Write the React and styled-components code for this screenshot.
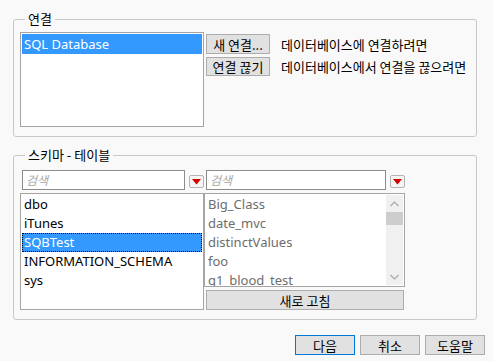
import React from "react";
import styled, { createGlobalStyle } from "styled-components";

const GlobalStyle = createGlobalStyle`
  html, body {
    margin: 0;
    padding: 0;
    background: #f9f9f9;
    font-family: "Noto Sans", "Noto Sans CJK KR", sans-serif;
    font-size: 13px;
    color: #000;
  }
`;

const Page = styled.div`
  width: 493px;
  height: 361px;
  padding: 0 16px 0 13px;
  box-sizing: border-box;
  display: flex;
  flex-direction: column;
`;

const Group = styled.fieldset`
  margin: ${(p) => p.$top}px 0 0 0;
  padding: ${(p) => p.$pt}px 6px ${(p) => p.$pb}px 6px;
  border: 1px solid #c8c8c8;
  border-radius: 3px;
  min-width: 0;
`;

const Legend = styled.legend`
  padding: 0 3px;
  margin-left: 5px;
  line-height: 18px;
  font-family: "Noto Sans CJK KR", sans-serif;
  font-size: 13px;
`;

const ConnRow = styled.div`
  display: flex;
  align-items: flex-start;
`;

const ListBox = styled.div`
  box-sizing: border-box;
  width: ${(p) => p.$w}px;
  height: ${(p) => p.$h}px;
  border: 1px solid #a5a5a5;
  background: #fff;
  padding: 1px;
  overflow: hidden;
  flex: none;
  display: flex;
`;

const Items = styled.div`
  flex: 1;
  min-width: 0;
`;

const Item = styled.div`
  height: ${(p) => p.$h}px;
  line-height: ${(p) => p.$h}px;
  padding-left: 2px;
  box-sizing: border-box;
  white-space: nowrap;
  font-size: 13px;
  color: ${(p) => (p.$sel ? "#fff" : p.$muted ? "#6d6d6d" : "#000")};
  background: ${(p) => (p.$sel ? "#3399ff" : "transparent")};
  outline: ${(p) => (p.$focus ? "1px dotted #000" : "none")};
  outline-offset: -1px;
`;

const Actions = styled.div`
  display: grid;
  grid-template-columns: 64px auto;
  column-gap: 11px;
  row-gap: 3px;
  margin: 2px 0 0 2px;
  align-items: center;
`;

const Button = styled.button`
  box-sizing: border-box;
  height: ${(p) => p.$h || 20}px;
  width: ${(p) => (p.$w ? p.$w + "px" : "100%")};
  padding: 0;
  margin: 0;
  background: #e1e1e1;
  border: 1px solid ${(p) => (p.$default ? "#0078d7" : "#adadad")};
  font-family: "Noto Sans CJK KR", sans-serif;
  font-size: 13px;
  color: #000;
  line-height: 1;
  border-radius: 0;
`;

const Hint = styled.span`
  font-family: "Noto Sans CJK KR", sans-serif;
  font-size: 13px;
  white-space: nowrap;
`;

const SchemaGrid = styled.div`
  display: grid;
  grid-template-columns: 184px 201px;
  grid-template-rows: 23px auto;
`;

const SearchCell = styled.div`
  display: flex;
  align-items: flex-start;
  padding-left: 2px;
`;

const Search = styled.div`
  box-sizing: border-box;
  width: ${(p) => p.$w}px;
  height: 20px;
  border: 1px solid #8c8c8c;
  background: #fff;
  padding-left: 3px;
  font-family: "Noto Sans CJK KR", sans-serif;
  font-style: italic;
  font-size: 12px;
  line-height: 18px;
  color: #a8a8a8;
`;

const DropBtn = styled.div`
  box-sizing: border-box;
  width: 15px;
  height: 13px;
  margin: 5px 0 0 4px;
  border: 1px solid #b4b4b4;
  border-radius: 2px;
  background: #f4f4f4;
  display: flex;
  align-items: center;
  justify-content: center;
`;

const TableCol = styled.div`
  display: flex;
  flex-direction: column;
  gap: 3px;
`;

const RefreshWrap = styled.div`
  padding-left: 2px;
`;

const ScrollBar = styled.div`
  width: 17px;
  flex: none;
  background: #f0f0f0;
  display: flex;
  flex-direction: column;
  align-items: center;
`;

const Arrow = styled.div`
  height: 17px;
  display: flex;
  align-items: center;
  justify-content: center;
`;

const Thumb = styled.div`
  width: 17px;
  height: 13px;
  background: #cdcdcd;
`;

const Track = styled.div`
  flex: 1;
`;

const Footer = styled.div`
  display: flex;
  justify-content: flex-end;
  gap: 5px;
  margin: 15px -8px 0 0;
`;

const Triangle = () => (
  <svg width="9" height="6" viewBox="0 0 9 6">
    <path d="M0 0 L9 0 L4.5 5.5 Z" fill="#d40000" />
  </svg>
);

const Chevron = ({ up }) => (
  <svg width="9" height="6" viewBox="0 0 9 6">
    <path
      d={up ? "M0.5 5 L4.5 1 L8.5 5" : "M0.5 1 L4.5 5 L8.5 1"}
      fill="none"
      stroke="#a8a8a8"
      strokeWidth="1.2"
    />
  </svg>
);

const schemas = ["dbo", "iTunes", "SQBTest", "INFORMATION_SCHEMA", "sys"];
const tables = ["Big_Class", "date_mvc", "distinctValues", "foo", "g1_blood_test"];

export default function App() {
  return (
    <>
      <GlobalStyle />
      <Page>
        <Group $top={10} $pt={4} $pb={9}>
          <Legend>연결</Legend>
          <ConnRow>
            <ListBox $w={184} $h={95}>
              <Items>
                <Item $h={20} $sel>
                  SQL Database
                </Item>
              </Items>
            </ListBox>
            <Actions>
              <Button $h={20}>새 연결...</Button>
              <Hint>데이터베이스에 연결하려면</Hint>
              <Button $h={19}>연결 끊기</Button>
              <Hint>데이터베이스에서 연결을 끊으려면</Hint>
            </Actions>
          </ConnRow>
        </Group>

        <Group $top={9} $pt={6} $pb={9}>
          <Legend>스키마 - 테이블</Legend>
          <SchemaGrid>
            <SearchCell>
              <Search $w={163}>검색</Search>
              <DropBtn>
                <Triangle />
              </DropBtn>
            </SearchCell>
            <SearchCell>
              <Search $w={180}>검색</Search>
              <DropBtn>
                <Triangle />
              </DropBtn>
            </SearchCell>

            <ListBox $w={184} $h={117}>
              <Items>
                {schemas.map((s, i) => (
                  <Item key={s} $h={19} $sel={i === 2} $focus={i === 2}>
                    {s}
                  </Item>
                ))}
              </Items>
            </ListBox>

            <TableCol>
              <ListBox $w={201} $h={94}>
                <Items>
                  {tables.map((t) => (
                    <Item key={t} $h={19} $muted>
                      {t}
                    </Item>
                  ))}
                </Items>
                <ScrollBar>
                  <Arrow>
                    <Chevron up />
                  </Arrow>
                  <Thumb />
                  <Track />
                  <Arrow>
                    <Chevron />
                  </Arrow>
                </ScrollBar>
              </ListBox>
              <RefreshWrap>
                <Button $h={20} $w={198}>
                  새로 고침
                </Button>
              </RefreshWrap>
            </TableCol>
          </SchemaGrid>
        </Group>

        <Footer>
          <Button $w={60} $default>
            다음
          </Button>
          <Button $w={60}>취소</Button>
          <Button $w={60}>도움말</Button>
        </Footer>
      </Page>
    </>
  );
}
